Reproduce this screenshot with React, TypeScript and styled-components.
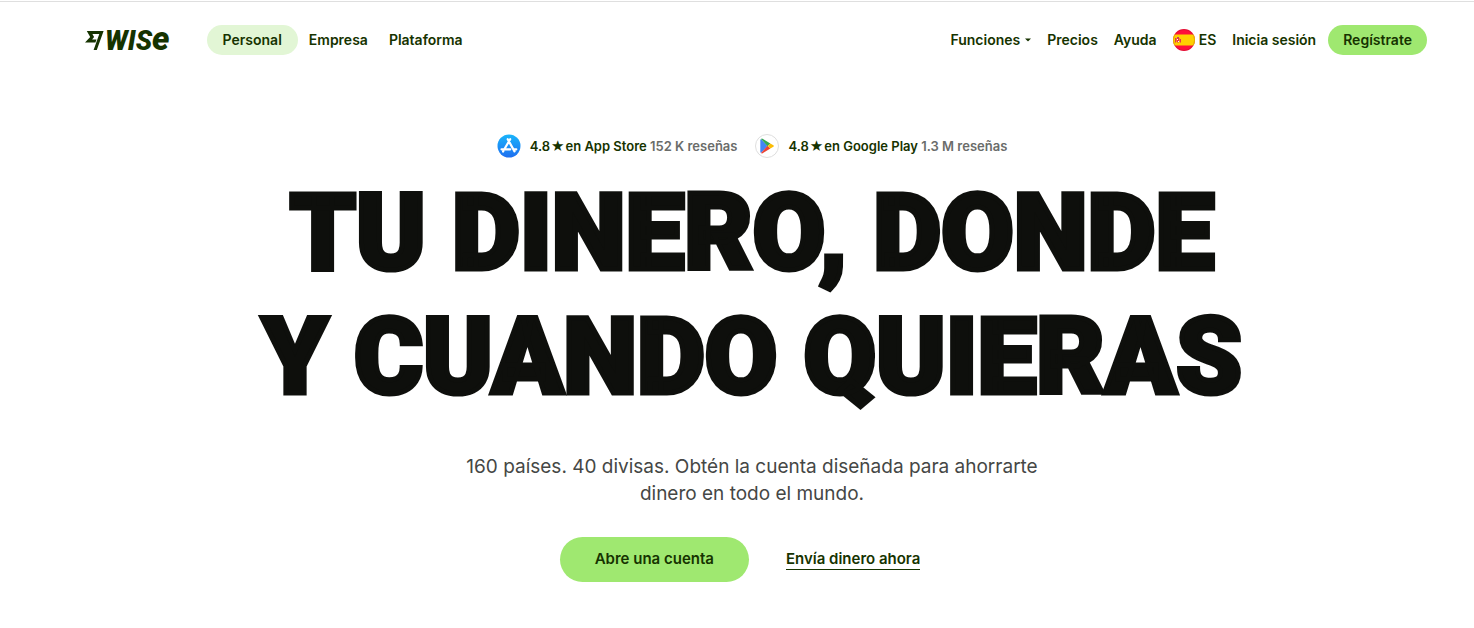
import React from "react";
import styled, { createGlobalStyle } from "styled-components";

const GlobalStyle = createGlobalStyle`
  *, *::before, *::after { box-sizing: border-box; }
  body {
    margin: 0;
    background: #fff;
    color: #163300;
    font-family: Inter, "Liberation Sans", sans-serif;
  }
  a { color: inherit; text-decoration: none; }
  button { font: inherit; color: inherit; border: 0; background: none; padding: 0; cursor: pointer; }
`;

const Page = styled.div`
  padding-top: 1px;
`;

const Header = styled.header`
  display: flex;
  align-items: center;
  justify-content: space-between;
  border-top: 1px solid #dfdfdf;
  padding: 23px 47px 23px 85px;
  font-size: 14px;
  font-weight: 600;
  line-height: 20px;
`;

const HeaderGroup = styled.div`
  display: flex;
  align-items: center;
  gap: 37px;
`;

const Logo = styled.a`
  display: flex;
  align-items: center;
  height: 30px;
  gap: 1px;
`;

const Wordmark = styled.span`
  font-family: Roboto, sans-serif;
  font-size: 27px;
  font-style: italic;
  font-weight: 900;
  line-height: 30px;
`;

const WordmarkTail = styled.span`
  font-size: 33px;
  line-height: 30px;
`;

const Nav = styled.nav<{ $gap: number }>`
  display: flex;
  align-items: center;
  gap: ${({ $gap }) => $gap}px;
`;

const Tab = styled.a<{ $active?: boolean }>`
  padding: 5px ${({ $active }) => ($active ? 16 : 10)}px;
  border-radius: 15px;
  background: ${({ $active }) => ($active ? "#e2f6d5" : "transparent")};
`;

const MenuButton = styled.button<{ $gap: number }>`
  display: flex;
  align-items: center;
  gap: ${({ $gap }) => $gap}px;
`;

const SignUp = styled.a`
  padding: 5px 15px;
  border-radius: 15px;
  background: #9fe870;
`;

const AccountLinks = styled.div`
  display: flex;
  align-items: center;
  gap: 12px;
`;

const Hero = styled.main`
  display: flex;
  flex-direction: column;
  align-items: center;
  padding: 56px 0 46px 30px;
  text-align: center;
`;

const Ratings = styled.div`
  display: flex;
  flex-wrap: wrap;
  justify-content: center;
  gap: 18px;
`;

const Rating = styled.a`
  display: flex;
  align-items: center;
  gap: 9px;
  font-size: 13px;
  font-weight: 600;
  line-height: 24px;
`;

const Star = styled.span`
  font-family: "DejaVu Sans", sans-serif;
  font-size: 15px;
  line-height: 20px;
  margin: 0 1px;
`;

const Reviews = styled.span`
  color: #6a6c6a;
`;

const Title = styled.h1`
  margin: 14px 0 0;
  color: #0e0f0c;
  font-family: Roboto, sans-serif;
  font-size: 105px;
  font-weight: 900;
  line-height: 124px;
  text-transform: uppercase;
  -webkit-text-stroke: 5px #0e0f0c;
`;

const Lead = styled.p`
  max-width: 600px;
  margin: 33px 0 0;
  color: #454745;
  font-size: 19px;
  line-height: 27px;
`;

const Actions = styled.div`
  display: flex;
  align-items: center;
  gap: 13px;
  margin-top: 30px;
  font-size: 15px;
  font-weight: 600;
  line-height: 21px;
`;

const PrimaryAction = styled.a`
  padding: 11px 35px 13px;
  border-radius: 23px;
  background: #9fe870;
`;

const SecondaryAction = styled.a`
  padding: 0 24px 2px;
`;

const Underlined = styled.span`
  display: block;
  border-bottom: 1px solid #163300;
`;

const FastFlag = () => (
  <svg width="19" height="19" viewBox="0 0 19 19" aria-hidden="true">
    <path
      fill="#163300"
      d="M1.8 0H18.6L11.8 19H8.6L14.3 3.1H7.4L9.1 6 7.1 8.4H11.5L10.4 11.4H0L5.2 6Z"
    />
  </svg>
);

const Caret = () => (
  <svg width="6" height="4" viewBox="0 0 6 4" aria-hidden="true">
    <path fill="#163300" d="M0 0.5H6L3.5 3Q3 3.5 2.5 3Z" />
  </svg>
);

const SpainFlag = () => (
  <svg width="22" height="22" viewBox="0 0 22 22" aria-hidden="true">
    <clipPath id="flag-round">
      <circle cx="11" cy="11" r="11" />
    </clipPath>
    <g clipPath="url(#flag-round)">
      <rect width="22" height="22" fill="#ff0f3a" />
      <rect y="5.5" width="22" height="11" fill="#ffcf00" />
      <path fill="#e8344a" d="M2 9h1v4.500H2zM7 10h1v3.500H7zM3.500 9h3V12q0 1.500-1.500 1.500t-1.500-1.500z" />
      <path fill="#fff" d="M4 10h1v1H4zM5 12h1v1H5z" />
      <path fill="#b4505a" d="M4 8h2v1H4z" />
    </g>
    <circle cx="11" cy="11" r="10.500" fill="none" stroke="#000" strokeOpacity="0.12" />
  </svg>
);

const AppStoreIcon = () => (
  <svg width="24" height="24" viewBox="0 0 24 24" aria-hidden="true">
    <defs>
      <linearGradient id="store-blue" x1="0" y1="0" x2="0" y2="1">
        <stop offset="0" stopColor="#19b5fb" />
        <stop offset="1" stopColor="#1e6ff0" />
      </linearGradient>
    </defs>
    <circle cx="12" cy="12" r="11.500" fill="url(#store-blue)" />
    <g stroke="#fff" strokeWidth="2.200" strokeLinecap="round" fill="none">
      <path d="M13.200 5.200L7.300 15.300M10.700 5.200L17.500 17.400M4.500 15.300H13.300M16.600 15.300H19.300M6.100 17.500L6.400 17" />
    </g>
  </svg>
);

const GooglePlayIcon = () => (
  <svg width="24" height="24" viewBox="0 0 24 24" aria-hidden="true">
    <circle cx="12" cy="12" r="11.500" fill="#fff" stroke="#dedede" />
    <path fill="#4285f4" d="M6 5L12.500 12 6 19Q5.300 18.600 5.300 17.500V6.500Q5.300 5.400 6 5Z" />
    <path fill="#34a853" d="M6 5Q6.700 4.300 7.600 4.800L15.300 9.400 12.500 12.300Z" />
    <path fill="#ea4335" d="M6 19Q6.700 19.700 7.600 19.200L15.300 14.600 12.500 11.700Z" />
    <path fill="#fbbc04" d="M15.300 9.400L18.400 11.200Q19.500 12 18.400 12.800L15.300 14.600 12.700 12Z" />
  </svg>
);

export default function App() {
  return (
    <>
      <GlobalStyle />
      <Page>
        <Header>
          <HeaderGroup>
            <Logo href="#" aria-label="Wise">
              <FastFlag />
              <Wordmark>
                WIS<WordmarkTail>e</WordmarkTail>
              </Wordmark>
            </Logo>
            <Nav $gap={1} aria-label="Productos">
              <Tab href="#" $active aria-current="page">Personal</Tab>
              <Tab href="#">Empresa</Tab>
              <Tab href="#">Plataforma</Tab>
            </Nav>
          </HeaderGroup>
          <Nav $gap={16} aria-label="Principal">
            <MenuButton type="button" $gap={5}>
              Funciones <Caret />
            </MenuButton>
            <a href="#">Precios</a>
            <a href="#">Ayuda</a>
            <MenuButton type="button" $gap={4}>
              <SpainFlag /> ES
            </MenuButton>
            <AccountLinks>
              <a href="#">Inicia sesión</a>
              <SignUp href="#">Regístrate</SignUp>
            </AccountLinks>
          </Nav>
        </Header>
        <Hero>
          <Ratings>
            <Rating href="#">
              <AppStoreIcon />
              <span>4.8<Star>★</Star>en App Store <Reviews>152 K reseñas</Reviews></span>
            </Rating>
            <Rating href="#">
              <GooglePlayIcon />
              <span>4.8<Star>★</Star>en Google Play <Reviews>1.3 M reseñas</Reviews></span>
            </Rating>
          </Ratings>
          <Title>
            Tu dinero, donde
            <br />y cuando quieras
          </Title>
          <Lead>160 países. 40 divisas. Obtén la cuenta diseñada para ahorrarte dinero en todo el mundo.</Lead>
          <Actions>
            <PrimaryAction href="#">Abre una cuenta</PrimaryAction>
            <SecondaryAction href="#">
              <Underlined>Envía dinero ahora</Underlined>
            </SecondaryAction>
          </Actions>
        </Hero>
      </Page>
    </>
  );
}
